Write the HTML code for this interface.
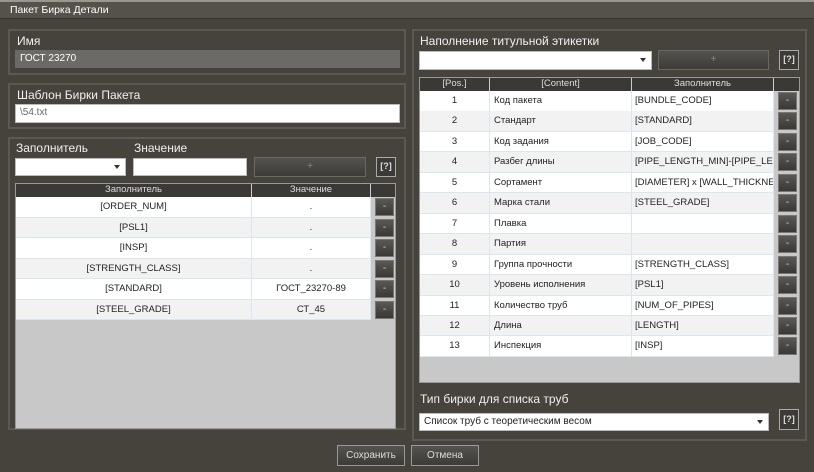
<!DOCTYPE html><html><head><meta charset="utf-8"><style>
*{box-sizing:border-box;margin:0;padding:0}
body{width:814px;height:472px;background:#46433d;font-family:"Liberation Sans","Noto Sans CJK SC",sans-serif;color:#fff;position:relative;overflow:hidden;font-size:11px}
.a{position:absolute}
.grp{position:absolute;border:2px solid #5c5952;}
.lbl{position:absolute;font-size:12px;color:#f0f0f0}
.inp{position:absolute;background:#fff;border:1px solid #bbb;color:#666;font-size:10px;padding-left:4px;line-height:16px}
.btn{position:absolute;background:linear-gradient(#55534f,#3d3b38);border:1px solid #6a6864;color:#888;text-align:center;font-size:10px}
.q{position:absolute;background:#3c3a37;border:1px solid #aaa;color:#ddd;font-size:9px;text-align:center;line-height:17px;font-weight:bold}
.grid{position:absolute;background:#c8c8c8;border:1px solid #999}
.row{position:absolute;left:0;height:20.5px;border-bottom:1px solid #dbe6f0;color:#222;font-size:9.5px;line-height:19px}
.hd{position:absolute;top:0;left:0;right:0;height:13px;background:#3b3935;color:#ddd;font-size:9.5px;line-height:12px}
.c{position:absolute;top:0;height:100%;border-right:1px solid #dbe6f0;overflow:hidden;white-space:nowrap}
.hd .c{border-right:1px solid #ccc;text-align:center}
.m{position:absolute;width:19px;height:18px;top:1px;background:linear-gradient(#5a5854,#3a3835);border:1px solid #777;color:#ccc;text-align:center;line-height:16px;font-size:10px}
.arr{position:absolute;right:5px;top:6px;border-left:3px solid transparent;border-right:3px solid transparent;border-top:4px solid #333}
</style></head><body>
<div class="a" style="left:0;top:0;width:814px;height:2px;background:#9a978f"></div>
<div class="a" style="left:0;top:2px;width:814px;height:17px;background:#55524b;border-bottom:1px solid #36342f"></div>
<div class="a" style="left:10px;top:4px;font-size:10.5px">Пакет Бирка Детали</div>

<div class="grp" style="left:8px;top:29px;width:398px;height:46px"></div>
<div class="lbl" style="left:17px;top:34px">Имя</div>
<div class="inp" style="left:15px;top:50px;width:385px;height:18px;background:#6b6a67;border-color:#6b6a67;color:#fff">ГОСТ 23270</div>

<div class="grp" style="left:8px;top:83px;width:398px;height:46px"></div>
<div class="lbl" style="left:17px;top:88px">Шаблон Бирки Пакета</div>
<div class="inp" style="left:15px;top:104px;width:385px;height:19px">\54.txt</div>

<div class="grp" style="left:8px;top:137px;width:398px;height:293px"></div>
<div class="lbl" style="left:16px;top:141px">Заполнитель</div>
<div class="lbl" style="left:134px;top:141px">Значение</div>
<div class="inp" style="left:15px;top:158px;width:111px;height:18px"><div class="arr"></div></div>
<div class="inp" style="left:133px;top:158px;width:114px;height:18px"></div>
<div class="btn" style="left:254px;top:157px;width:112px;height:20px;line-height:18px">+</div>
<div class="q" style="left:376px;top:157px;width:20px;height:20px">[?]</div>
<div class="grid" style="left:15px;top:183px;width:381px;height:246px">
<div class="hd"><div class="c" style="left:0;width:236px">Заполнитель</div><div class="c" style="left:236px;width:119px">Значение</div></div>
<div id="lg"></div>
</div>

<div class="grp" style="left:412px;top:29px;width:395px;height:412px"></div>
<div class="lbl" style="left:420px;top:34px">Наполнение титульной этикетки</div>
<div class="inp" style="left:419px;top:51px;width:233px;height:19px"><div class="arr"></div></div>
<div class="btn" style="left:658px;top:50px;width:111px;height:20px;line-height:18px">+</div>
<div class="q" style="left:779px;top:50px;width:20px;height:20px">[?]</div>
<div class="grid" style="left:419px;top:77px;width:381px;height:306px">
<div class="hd"><div class="c" style="left:0;width:70px">[Pos.]</div><div class="c" style="left:70px;width:142px">[Content]</div><div class="c" style="left:212px;width:142px">Заполнитель</div></div>
<div id="rg"></div>
</div>
<div class="lbl" style="left:420px;top:392px">Тип бирки для списка труб</div>
<div class="inp" style="left:419px;top:413px;width:350px;height:18px;color:#222">Список труб с теоретическим весом<div class="arr"></div></div>
<div class="q" style="left:779px;top:409px;width:20px;height:21px;line-height:19px">[?]</div>

<div class="btn" style="left:337px;top:445px;width:68px;height:21px;line-height:19px;color:#ddd;border-color:#999">Сохранить</div>
<div class="btn" style="left:411px;top:445px;width:68px;height:21px;line-height:19px;color:#ddd;border-color:#999">Отмена</div>
<script>
var L=[["[ORDER_NUM]","."],["[PSL1]","."],["[INSP]","."],["[STRENGTH_CLASS]","."],["[STANDARD]","ГОСТ_23270-89"],["[STEEL_GRADE]","СТ_45"]];
var h="";L.forEach(function(r,i){h+='<div class="row" style="top:'+(13+i*20.5)+'px;width:355px;background:'+(i%2?'#f2f2f2':'#fff')+'"><div class="c" style="left:0;width:236px;text-align:center">'+r[0]+'</div><div class="c" style="left:236px;width:119px;text-align:center">'+r[1]+'</div></div><div class="m" style="left:359px;top:'+(14+i*20.5)+'px">-</div>';});
document.getElementById("lg").innerHTML=h;
var R=[["Код пакета","[BUNDLE_CODE]"],["Стандарт","[STANDARD]"],["Код задания","[JOB_CODE]"],["Разбег длины","[PIPE_LENGTH_MIN]-[PIPE_LENGTH_MAX]"],["Сортамент","[DIAMETER] x [WALL_THICKNESS]"],["Марка стали","[STEEL_GRADE]"],["Плавка",""],["Партия",""],["Группа прочности","[STRENGTH_CLASS]"],["Уровень исполнения","[PSL1]"],["Количество труб","[NUM_OF_PIPES]"],["Длина","[LENGTH]"],["Инспекция","[INSP]"]];
h="";R.forEach(function(r,i){h+='<div class="row" style="top:'+(13+i*20.45)+'px;width:354px;background:'+(i%2?'#f2f2f2':'#fff')+'"><div class="c" style="left:0;width:70px;text-align:center">'+(i+1)+'</div><div class="c" style="left:70px;width:142px;padding-left:4px">'+r[0]+'</div><div class="c" style="left:212px;width:142px;padding-left:3px">'+r[1]+'</div></div><div class="m" style="left:358px;top:'+(14+i*20.45)+'px">-</div>';});
document.getElementById("rg").innerHTML=h;
</script>
</body></html>
